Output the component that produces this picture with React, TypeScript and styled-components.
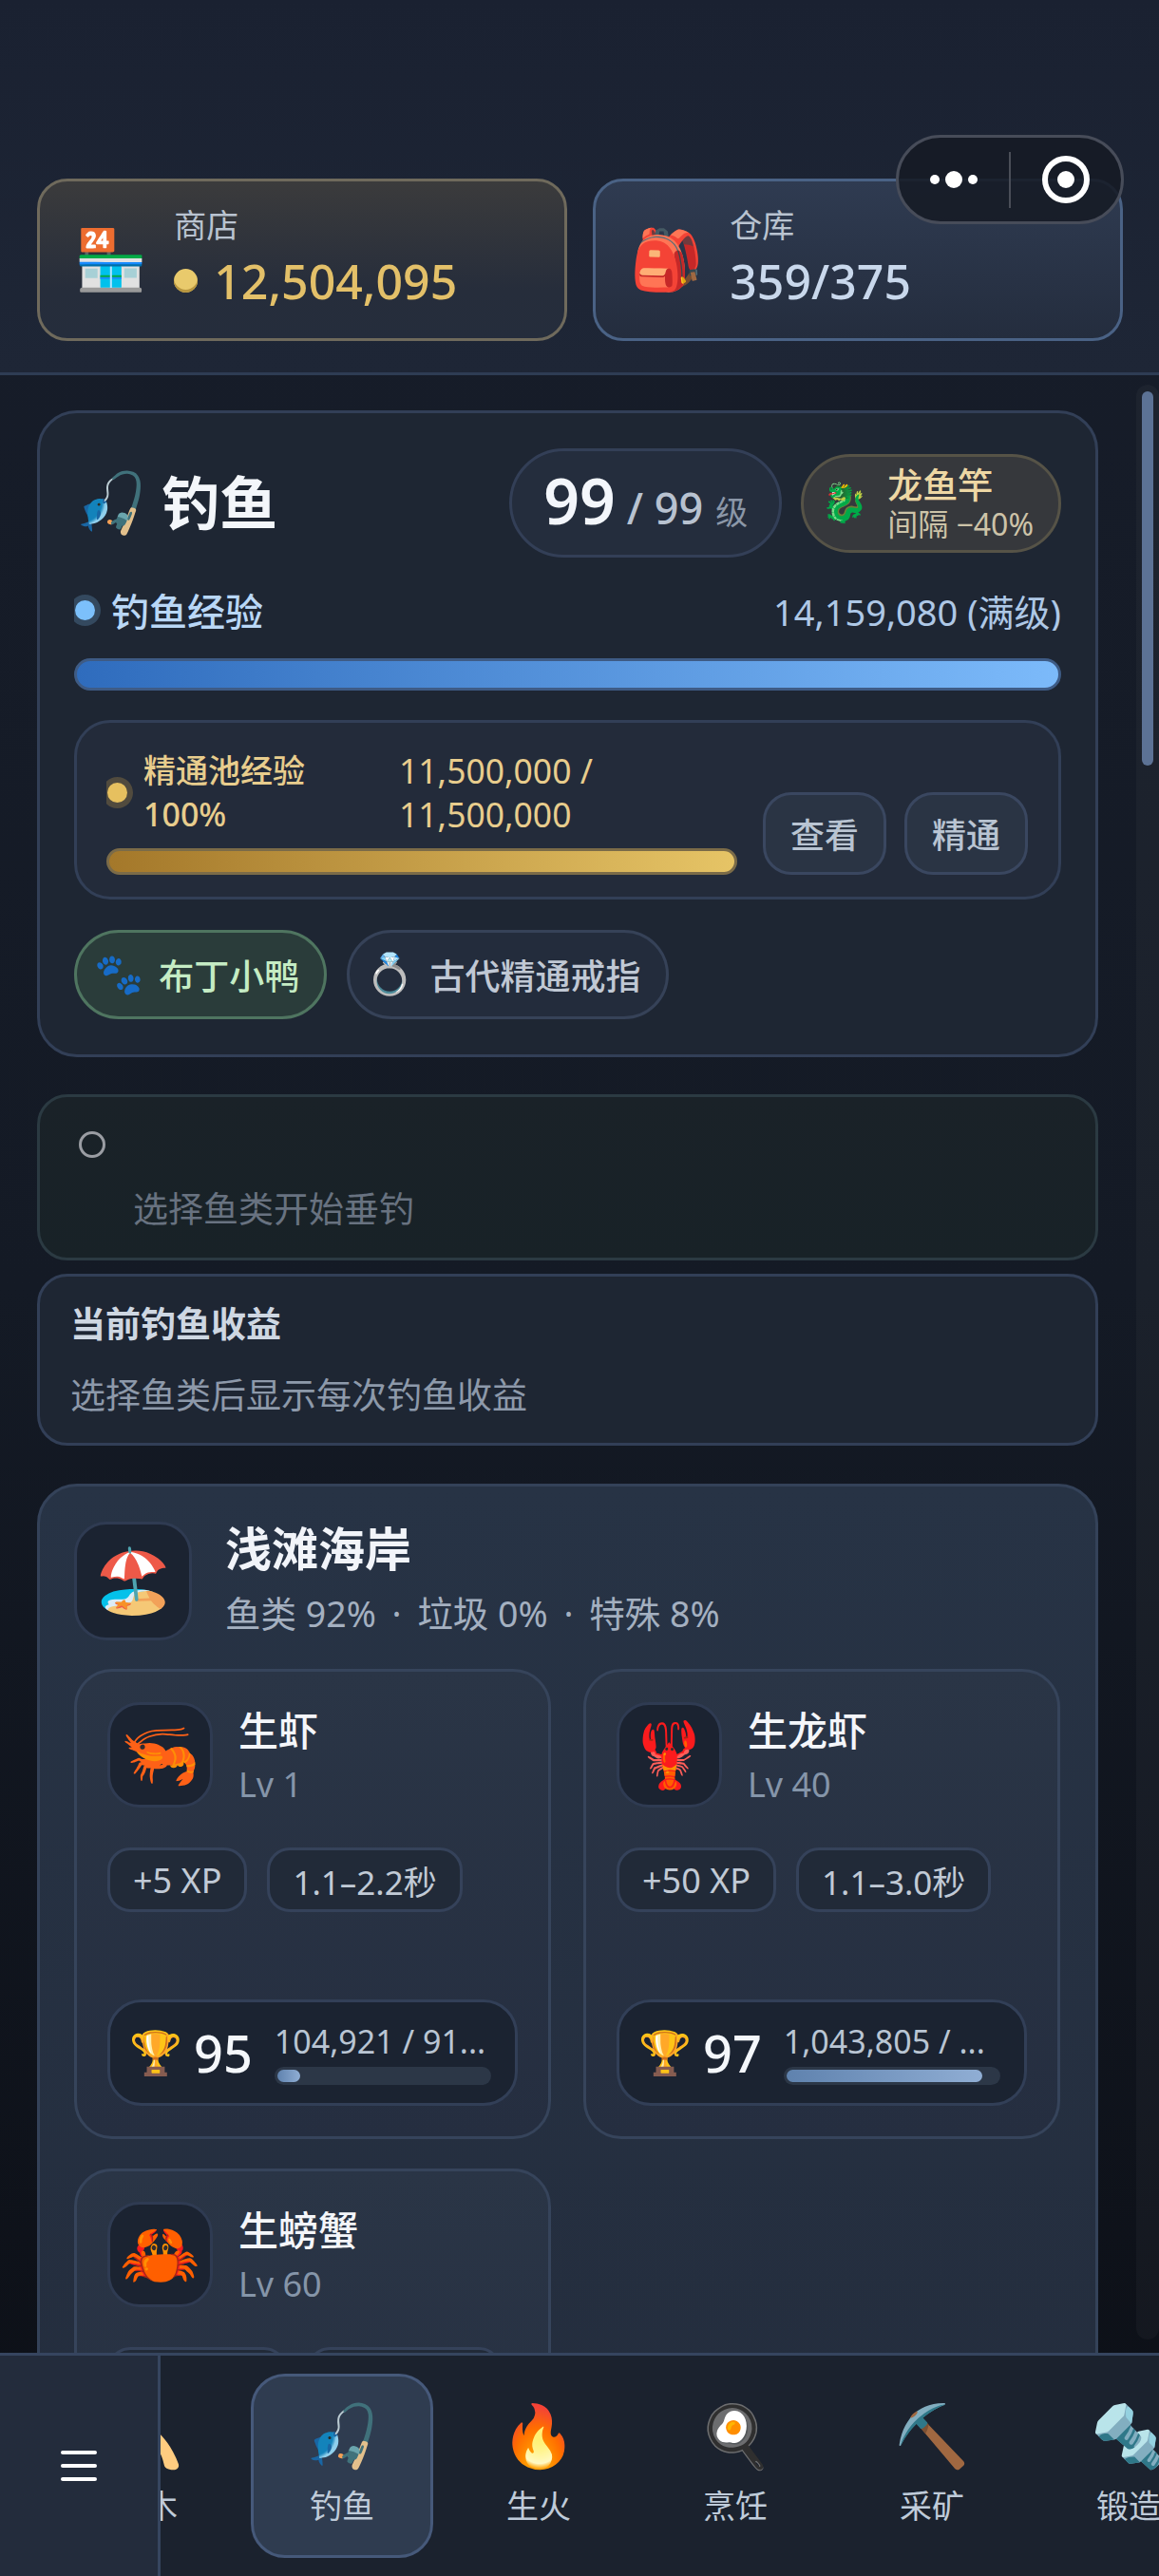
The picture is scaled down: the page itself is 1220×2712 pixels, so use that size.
import * as React from "react";
import styled, { createGlobalStyle } from "styled-components";

const GlobalStyle = createGlobalStyle`
    html, body {
        margin: 0;
        padding: 0;
        background: #141924;
    }
    * {
        box-sizing: border-box;
    }
`;

const SANS = `"Noto Sans", "Noto Sans CJK SC", sans-serif`;

const Page = styled.div`
    position: relative;
    width: 1220px;
    height: 2712px;
    display: flex;
    flex-direction: column;
    overflow: hidden;
    font-family: ${SANS};
    color: #fff;
    background: linear-gradient(180deg, #171d2a 0%, #141a25 50%, #0c0f16 100%);
`;

const Emoji = styled.span<{ $size: number }>`
    font-family: "Noto Color Emoji", sans-serif;
    font-size: ${p => p.$size}px;
    line-height: 1;
    display: inline-flex;
    align-items: center;
    justify-content: center;
    flex-shrink: 0;
`;

/* top bar */
const Header = styled.header`
    flex-shrink: 0;
    height: 395px;
    padding: 188px 39px 0;
    display: grid;
    grid-template-columns: 558px 558px;
    column-gap: 27px;
    align-items: start;
    background: linear-gradient(180deg, #1a2131 0%, #1e2636 100%);
    border-bottom: 3px solid #2e3c54;
`;

const TopCard = styled.div<{ $gold?: boolean }>`
    height: 171px;
    display: flex;
    align-items: center;
    padding: 0 28px 0 36px;
    gap: 28px;
    border-radius: 32px;
    border: 3px solid ${p => (p.$gold ? "#6f6a5c" : "#4a6285")};
    background: ${p => p.$gold
        ? "linear-gradient(180deg, #3b3b3c 0%, #262d3b 70%, #252d3c 100%)"
        : "linear-gradient(180deg, #2f3b51 0%, #242d3e 100%)"};
`;

const TopText = styled.div`
    display: flex;
    flex-direction: column;
    gap: 6px;
    padding-bottom: 8px;
`;

const TopLabel = styled.div`
    font-size: 34px;
    line-height: 46px;
    color: #b9c3d0;
`;

const TopValue = styled.div<{ $gold?: boolean }>`
    display: flex;
    align-items: center;
    gap: 17px;
    font-size: 50px;
    line-height: 60px;
    font-weight: 500;
    color: ${p => (p.$gold ? "#e3c069" : "#c9d8ec")};
`;

const Coin = styled.span`
    width: 25px;
    height: 25px;
    border-radius: 50%;
    background: #e9ca6c;
    box-shadow: inset 0 -3px 0 #b8963f;
`;

const Capsule = styled.div`
    position: absolute;
    left: 943px;
    top: 142px;
    width: 240px;
    height: 94px;
    display: flex;
    align-items: center;
    border-radius: 47px;
    border: 3px solid #474c59;
    background: rgba(22, 26, 36, 0.88);
`;

const CapsuleSide = styled.div`
    flex: 1;
    display: flex;
    align-items: center;
    justify-content: center;
    gap: 6px;
`;

const CapsuleDivider = styled.div`
    width: 2px;
    height: 59px;
    background: #4a4e58;
`;

const MoreDot = styled.span<{ $big?: boolean }>`
    width: ${p => (p.$big ? 18 : 10)}px;
    height: ${p => (p.$big ? 18 : 10)}px;
    border-radius: 50%;
    background: #fff;
`;

const TargetRing = styled.span`
    width: 50px;
    height: 50px;
    border-radius: 50%;
    border: 6px solid #fff;
    display: flex;
    align-items: center;
    justify-content: center;
    &::after {
        content: "";
        width: 18px;
        height: 18px;
        border-radius: 50%;
        background: #fff;
    }
`;

/* scrolling part */
const Scroll = styled.main`
    flex: 1;
    min-height: 0;
    overflow: hidden;
    padding: 37px 64px 0 39px;
`;

const ScrollTrack = styled.div`
    position: absolute;
    left: 1196px;
    top: 405px;
    width: 24px;
    height: 2058px;
    border-radius: 12px;
    background: rgba(255, 255, 255, 0.03);
`;

const ScrollThumb = styled.div`
    position: absolute;
    left: 1202px;
    top: 412px;
    width: 12px;
    height: 394px;
    border-radius: 6px;
    background: #5c7295;
`;

const Panel = styled.section`
    padding: 37px 36px;
    border-radius: 42px;
    border: 3px solid #323f57;
    background: #1e2633;
`;

const SkillHead = styled.div`
    display: flex;
    align-items: center;
    height: 115px;
`;

const SkillTitle = styled.h1`
    margin: 0 0 0 15px;
    flex: 1;
    font-size: 61px;
    line-height: 80px;
    font-weight: 600;
    color: #f3f6fa;
`;

const LevelPill = styled.div`
    height: 115px;
    padding: 0 33px 0 33px;
    display: flex;
    align-items: baseline;
    line-height: 103px;
    border-radius: 58px;
    border: 3px solid #333f57;
    background: #242d3d;
`;

const LevelNow = styled.span`
    font-size: 66px;
    font-weight: 600;
    color: #f3f6fb;
`;

const LevelMax = styled.span`
    margin-left: 12px;
    font-size: 45px;
    font-weight: 500;
    color: #b8c2d0;
`;

const LevelUnit = styled.span`
    margin-left: 13px;
    font-size: 34px;
    color: #8b97a8;
`;

const RodPill = styled.div`
    margin-left: 20px;
    height: 104px;
    padding: 0 26px 0 18px;
    display: flex;
    align-items: center;
    gap: 20px;
    border-radius: 52px;
    border: 3px solid #565347;
    background: #36383c;
`;

const RodText = styled.div`
    display: flex;
    flex-direction: column;
`;

const RodName = styled.div`
    font-size: 37px;
    line-height: 44px;
    font-weight: 500;
    color: #edd7a4;
`;

const RodBonus = styled.div`
    font-size: 32px;
    line-height: 38px;
    color: #cdc3a8;
`;

const XpRow = styled.div`
    margin-top: 33px;
    height: 44px;
    display: flex;
    align-items: center;
    justify-content: space-between;
    overflow: hidden;
`;

const XpLabel = styled.div`
    display: flex;
    align-items: center;
    gap: 17px;
    font-size: 40px;
    font-weight: 500;
    color: #b9d7f6;
`;

const Dot = styled.span<{ $color: string; $ring: string }>`
    width: 21px;
    height: 21px;
    margin-left: 1px;
    border-radius: 50%;
    background: ${p => p.$color};
    box-shadow: 0 0 0 6px ${p => p.$ring};
    flex-shrink: 0;
`;

const XpValue = styled.div`
    font-size: 38px;
    color: #aec8e6;
`;

const Bar = styled.div<{ $gold?: boolean; $h: number }>`
    height: ${p => p.$h}px;
    border-radius: ${p => p.$h / 2}px;
    border: 3px solid ${p => (p.$gold ? "#7b6b48" : "#3e5b85")};
    background: ${p => p.$gold
        ? "linear-gradient(90deg, #a4782a 0%, #e6c466 100%)"
        : "linear-gradient(90deg, #2f6cbd 0%, #7cbafa 100%)"};
`;

const XpBar = styled(Bar)`
    margin-top: 29px;
`;

const Mastery = styled.div`
    margin-top: 31px;
    height: 189px;
    padding: 26px 31px 23px;
    display: flex;
    align-items: flex-end;
    gap: 27px;
    border-radius: 38px;
    border: 3px solid #323f57;
    background: #232b3a;
`;

const MasteryLeft = styled.div`
    width: 664px;
`;

const MasteryInfo = styled.div`
    display: flex;
    align-items: center;
    overflow: hidden;
    height: 92px;
    font-size: 34px;
    line-height: 46px;
    color: #e8cd8d;
`;

const MasteryLabel = styled.div`
    margin-left: 17px;
    width: 269px;
    font-weight: 500;
`;

const MasteryValue = styled.div`
    width: 230px;
    font-size: 35.5px;
`;

const MasteryBar = styled(Bar)`
    margin-top: 13px;
`;

const Button = styled.div`
    width: 130px;
    height: 87px;
    display: flex;
    align-items: center;
    justify-content: center;
    border-radius: 30px;
    border: 3px solid #3a4760;
    background: #2a3444;
    font-size: 36px;
    font-weight: 500;
    color: #b9c4d2;
    & + & {
        margin-left: -8px;
    }
`;

const ChipRow = styled.div`
    margin-top: 32px;
    display: flex;
    gap: 21px;
`;

const Chip = styled.div<{ $green?: boolean }>`
    height: 94px;
    padding: 0 26px 0 ${p => (p.$green ? 18 : 16)}px;
    display: flex;
    align-items: center;
    gap: 16px;
    border-radius: 47px;
    border: 3px solid ${p => (p.$green ? "#4f7560" : "#364258")};
    background: ${p => (p.$green ? "#2a3c3a" : "#232c3c")};
    font-size: 37px;
    font-weight: 500;
    color: ${p => (p.$green ? "#c5ecc4" : "#c0c8d4")};
`;

const StatusCard = styled.div`
    margin-top: 39px;
    height: 175px;
    padding: 36px 41px;
    border-radius: 32px;
    border: 3px solid #2b3a42;
    background: linear-gradient(180deg, #1a2228 0%, #182227 100%);
`;

const StatusCircle = styled.div`
    width: 28px;
    height: 28px;
    border-radius: 50%;
    border: 3px solid #9a9da3;
`;

const StatusText = styled.div`
    margin: 29px 0 0 57px;
    font-size: 37px;
    line-height: 50px;
    color: #687280;
`;

const IncomeCard = styled.div`
    margin-top: 14px;
    height: 181px;
    padding: 27px 32px;
    border-radius: 32px;
    border: 3px solid #323f57;
    background: #1e2633;
`;

const IncomeTitle = styled.div`
    font-size: 37px;
    line-height: 46px;
    font-weight: 700;
    color: #ced7e2;
`;

const IncomeText = styled.div`
    margin-top: 27px;
    font-size: 37px;
    line-height: 50px;
    color: #8d99aa;
`;

const ZoneCard = styled.section`
    margin-top: 40px;
    padding: 37px 36px;
    border-radius: 42px;
    border: 3px solid #344259;
    background: linear-gradient(180deg, #273345 0%, #232c3c 100%);
`;

const ZoneHead = styled.div`
    display: flex;
    height: 125px;
    gap: 35px;
`;

const ZoneIcon = styled.div`
    width: 124px;
    height: 125px;
    display: flex;
    align-items: center;
    justify-content: center;
    border-radius: 34px;
    border: 3px solid #2f3b52;
    background: #1b2331;
`;

const ZoneText = styled.div`
    display: flex;
    flex-direction: column;
`;

const ZoneTitle = styled.h2`
    margin: 0;
    font-size: 49px;
    line-height: 56px;
    font-weight: 600;
    color: #f1f4f9;
`;

const ZoneSub = styled.div`
    margin-top: 16px;
    font-size: 37.5px;
    line-height: 50px;
    color: #a4b0c0;
`;

const ZoneSep = styled.span`
    margin: 0 7px;
`;

const FishGrid = styled.div`
    margin-top: 30px;
    display: grid;
    grid-template-columns: 502px 502px;
    column-gap: 34px;
    row-gap: 31px;
`;

const FishCard = styled.div`
    min-height: 495px;
    padding: 32px;
    display: flex;
    flex-direction: column;
    border-radius: 40px;
    border: 3px solid #36445b;
    background: linear-gradient(180deg, #2a3546 0%, #252e40 100%);
`;

const FishHead = styled.div`
    display: flex;
    align-items: center;
    gap: 27px;
`;

const FishIcon = styled.div`
    width: 111px;
    height: 111px;
    display: flex;
    align-items: center;
    justify-content: center;
    border-radius: 34px;
    border: 3px solid #2f3b52;
    background: #1b2331;
`;

const FishName = styled.div`
    font-size: 42px;
    line-height: 56px;
    font-weight: 500;
    color: #f4f6fa;
`;

const FishLevel = styled.div`
    margin-top: 6px;
    font-size: 36px;
    line-height: 46px;
    color: #8595a9;
`;

const FishTags = styled.div`
    margin-top: 42px;
    display: flex;
    gap: 21px;
`;

const FishTag = styled.div<{ $time?: boolean }>`
    height: 68px;
    padding: 0 24px;
    display: flex;
    align-items: center;
    border-radius: 24px;
    border: 3px solid #35425a;
    background: #212a38;
    font-size: ${p => (p.$time ? 35 : 36)}px;
    color: #c1cad6;
`;

const Mastered = styled.div`
    margin-top: auto;
    height: 112px;
    padding: 0 25px 0 20px;
    display: flex;
    align-items: center;
    border-radius: 36px;
    border: 3px solid #323f57;
    background: #1b2331;
`;

const MasteredLevel = styled.div`
    margin-left: 12px;
    font-size: 54px;
    font-weight: 500;
    color: #f4f7fb;
`;

const MasteredRight = styled.div`
    margin-left: 23px;
    flex: 1;
    min-width: 0;
`;

const MasteredText = styled.div`
    font-size: 34px;
    line-height: 44px;
    color: #b9c5d3;
    white-space: nowrap;
    overflow: hidden;
    text-overflow: ellipsis;
`;

const MasteredTrack = styled.div`
    margin-top: 5px;
    height: 19px;
    padding: 3px;
    border-radius: 10px;
    background: #2c3747;
`;

const MasteredFill = styled.div`
    height: 13px;
    border-radius: 7px;
    background: linear-gradient(90deg, #5f82ae 0%, #90aed4 100%);
`;

/* bottom nav */
const Nav = styled.nav`
    flex-shrink: 0;
    height: 235px;
    display: flex;
    border-top: 3px solid #36455f;
    background: #1b222e;
`;

const MenuButton = styled.div`
    width: 169px;
    flex-shrink: 0;
    display: flex;
    flex-direction: column;
    align-items: center;
    justify-content: center;
    gap: 10px;
    border-right: 3px solid #36455f;
    background: #232c3c;
`;

const MenuLine = styled.span`
    width: 38px;
    height: 4px;
    border-radius: 2px;
    background: #fff;
`;

const TabStrip = styled.div`
    flex: 1;
    min-width: 0;
    display: flex;
    align-items: center;
    gap: 15px;
    overflow: hidden;
`;

const Tab = styled.div<{ $active?: boolean; $first?: boolean }>`
    width: 192px;
    height: 194px;
    flex-shrink: 0;
    margin-left: ${p => (p.$first ? "-112px" : 0)};
    display: flex;
    flex-direction: column;
    align-items: center;
    padding-top: 32px;
    gap: 18px;
    border-radius: 36px;
    border: 3px solid ${p => (p.$active ? "#46597a" : "transparent")};
    background: ${p => (p.$active ? "#2f3c50" : "transparent")};
`;

const TabLabel = styled.div`
    font-size: 34px;
    line-height: 44px;
    color: #bfcbd9;
`;

const tabs = [
    { icon: "🪓", label: "伐木" },
    { icon: "🎣", label: "钓鱼", active: true },
    { icon: "🔥", label: "生火" },
    { icon: "🍳", label: "烹饪" },
    { icon: "⛏️", label: "采矿" },
    { icon: "🔩", label: "锻造" },
];

const fishes = [
    { icon: "🦐", name: "生虾", level: 1, xp: "+5 XP", time: "1.1–2.2秒", mastery: 95, progress: "104,921 / 91...", pct: 11 },
    { icon: "🦞", name: "生龙虾", level: 40, xp: "+50 XP", time: "1.1–3.0秒", mastery: 97, progress: "1,043,805 / ...", pct: 93 },
    { icon: "🦀", name: "生螃蟹", level: 60, xp: "+100 XP", time: "1.1–3.0秒", mastery: 98, progress: "1,043,805 / ...", pct: 50 },
];

export default function App() {
    return (
        <Page>
            <GlobalStyle />
            <Header>
                <TopCard $gold>
                    <Emoji $size={62}>🏪</Emoji>
                    <TopText>
                        <TopLabel>商店</TopLabel>
                        <TopValue $gold><Coin />12,504,095</TopValue>
                    </TopText>
                </TopCard>
                <TopCard>
                    <Emoji $size={62}>🎒</Emoji>
                    <TopText>
                        <TopLabel>仓库</TopLabel>
                        <TopValue>359/375</TopValue>
                    </TopText>
                </TopCard>
            </Header>
            <Capsule>
                <CapsuleSide><MoreDot /><MoreDot $big /><MoreDot /></CapsuleSide>
                <CapsuleDivider />
                <CapsuleSide><TargetRing /></CapsuleSide>
            </Capsule>

            <Scroll>
                <Panel>
                    <SkillHead>
                        <Emoji $size={62}>🎣</Emoji>
                        <SkillTitle>钓鱼</SkillTitle>
                        <LevelPill>
                            <LevelNow>99</LevelNow>
                            <LevelMax>/ 99</LevelMax>
                            <LevelUnit>级</LevelUnit>
                        </LevelPill>
                        <RodPill>
                            <Emoji $size={40}>🐉</Emoji>
                            <RodText>
                                <RodName>龙鱼竿</RodName>
                                <RodBonus>间隔 −40%</RodBonus>
                            </RodText>
                        </RodPill>
                    </SkillHead>
                    <XpRow>
                        <XpLabel><Dot $color="#7cc0fb" $ring="#34495f" />钓鱼经验</XpLabel>
                        <XpValue>14,159,080 (满级)</XpValue>
                    </XpRow>
                    <XpBar $h={34} />
                    <Mastery>
                        <MasteryLeft>
                            <MasteryInfo>
                                <Dot $color="#e6c05f" $ring="#514b3e" />
                                <MasteryLabel>精通池经验<br />100%</MasteryLabel>
                                <MasteryValue>11,500,000 / 11,500,000</MasteryValue>
                            </MasteryInfo>
                            <MasteryBar $gold $h={28} />
                        </MasteryLeft>
                        <Button>查看</Button>
                        <Button>精通</Button>
                    </Mastery>
                    <ChipRow>
                        <Chip $green><Emoji $size={42}>🐾</Emoji>布丁小鸭</Chip>
                        <Chip><Emoji $size={42}>💍</Emoji>古代精通戒指</Chip>
                    </ChipRow>
                </Panel>

                <StatusCard>
                    <StatusCircle />
                    <StatusText>选择鱼类开始垂钓</StatusText>
                </StatusCard>

                <IncomeCard>
                    <IncomeTitle>当前钓鱼收益</IncomeTitle>
                    <IncomeText>选择鱼类后显示每次钓鱼收益</IncomeText>
                </IncomeCard>

                <ZoneCard>
                    <ZoneHead>
                        <ZoneIcon><Emoji $size={66}>🏖️</Emoji></ZoneIcon>
                        <ZoneText>
                            <ZoneTitle>浅滩海岸</ZoneTitle>
                            <ZoneSub>鱼类 92%<ZoneSep> · </ZoneSep>垃圾 0%<ZoneSep> · </ZoneSep>特殊 8%</ZoneSub>
                        </ZoneText>
                    </ZoneHead>
                    <FishGrid>
                        {fishes.map(f => (
                            <FishCard key={f.name}>
                                <FishHead>
                                    <FishIcon><Emoji $size={68}>{f.icon}</Emoji></FishIcon>
                                    <div>
                                        <FishName>{f.name}</FishName>
                                        <FishLevel>Lv {f.level}</FishLevel>
                                    </div>
                                </FishHead>
                                <FishTags>
                                    <FishTag>{f.xp}</FishTag>
                                    <FishTag $time>{f.time}</FishTag>
                                </FishTags>
                                <Mastered>
                                    <Emoji $size={45}>🏆</Emoji>
                                    <MasteredLevel>{f.mastery}</MasteredLevel>
                                    <MasteredRight>
                                        <MasteredText>{f.progress}</MasteredText>
                                        <MasteredTrack>
                                            <MasteredFill style={{ width: `${f.pct}%` }} />
                                        </MasteredTrack>
                                    </MasteredRight>
                                </Mastered>
                            </FishCard>
                        ))}
                    </FishGrid>
                </ZoneCard>
            </Scroll>
            <ScrollTrack />
            <ScrollThumb />

            <Nav>
                <MenuButton><MenuLine /><MenuLine /><MenuLine /></MenuButton>
                <TabStrip>
                    {tabs.map((t, i) => (
                        <Tab key={t.label} $active={t.active} $first={i === 0}>
                            <Emoji $size={64}>{t.icon}</Emoji>
                            <TabLabel>{t.label}</TabLabel>
                        </Tab>
                    ))}
                </TabStrip>
            </Nav>
        </Page>
    );
}
